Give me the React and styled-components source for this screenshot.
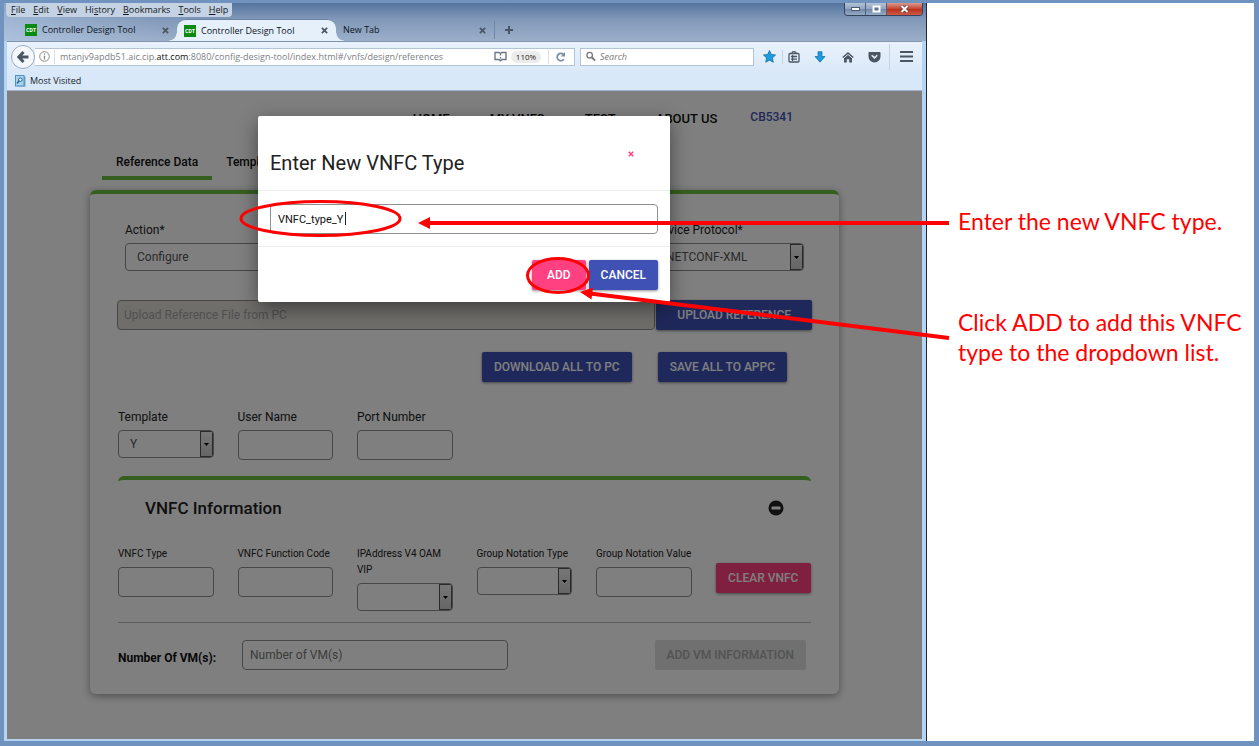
import React from "react";
import styled, { createGlobalStyle, css } from "styled-components";

const ui = `"Open Sans", "Noto Sans", sans-serif`;
const app = `Roboto, "Liberation Sans", sans-serif`;

const Global = createGlobalStyle`
  *, *::before, *::after { box-sizing: border-box; }
  body { margin: 0; background: #7092be; }
  button, input, select { font: inherit; margin: 0; color: inherit; }
  button { cursor: pointer; }
`;

const Slide = styled.main`
  position: relative;
  display: grid;
  grid-template-columns: minmax(0, 1fr) 327px;
  min-height: 100vh;
  border: solid #7092be;
  border-width: 3px 5px 5px 4px;
  background: #fff;
`;

const Browser = styled.section`
  display: flex;
  flex-direction: column;
  border-right: 1px solid #1e2733;
  background: #b4d4f1;
  font-family: ${ui};
  font-size: 9px;
  line-height: 14px;
  color: #16202c;
`;

const TitleArea = styled.header`
  background: linear-gradient(90deg, rgba(190, 212, 238, 0.5), rgba(190, 212, 238, 0) 160px),
    linear-gradient(#54749e, #8198b8 16px, #9bafc9 38px);
`;

const MenuRow = styled.div`
  display: flex;
  justify-content: space-between;
  align-items: flex-start;
  height: 16px;
  padding: 0 3px 0 2px;
`;

const Menus = styled.nav`
  display: flex;
  gap: 8px;
  height: 14px;
  padding: 0 4px 0 5px;
  border-radius: 0 0 4px 4px;
  background: #c5d2e3;
  a { color: #101820; text-decoration: none; line-height: 13px; }
`;

const WindowButtons = styled.div`
  display: flex;
  height: 13px;
  border: 1px solid #35445c;
  border-top: 0;
  border-radius: 0 0 4px 4px;
  overflow: hidden;
`;

const WindowButton = styled.button`
  display: grid;
  place-items: center;
  width: ${(p) => (p.$close ? 35 : 21)}px;
  padding: 0;
  border: 0;
  border-right: ${(p) => (p.$close ? "0" : "1px solid #4d607e")};
  background: ${(p) =>
    p.$close
      ? "linear-gradient(#d79a8f, #c4432f 50%, #b8301b 51%, #cf5a45)"
      : "linear-gradient(#b5c3d6, #8fa3bf 50%, #7189aa 51%, #93a9c6)"};
`;

const TabRow = styled.div`
  display: flex;
  align-items: stretch;
  height: 22px;
  padding-left: 14px;
`;

const BrowserTab = styled.div`
  position: relative;
  display: flex;
  align-items: center;
  gap: 5px;
  width: ${(p) => p.$width}px;
  padding: 0 8px 0 7px;
  color: #0c141e;
  ${(p) =>
    p.$active &&
    css`
      background: #e6f0fb;
      border-top: 1px solid #6d83a1;
      border-radius: 9px 9px 0 0;
      &::before, &::after {
        content: "";
        position: absolute;
        bottom: 0;
        width: 8px;
        height: 8px;
      }
      &::before {
        right: 100%;
        background: radial-gradient(circle at 0 0, transparent 7px, #e6f0fb 8px);
      }
      &::after {
        left: 100%;
        background: radial-gradient(circle at 100% 0, transparent 7px, #e6f0fb 8px);
      }
    `}
  span { flex: 1; white-space: nowrap; }
`;

const Favicon = styled.b`
  display: grid;
  place-items: center;
  width: 12px;
  height: 12px;
  background: #0b8a12;
  color: #fff;
  font-size: 5px;
  line-height: 12px;
`;

const IconButton = styled.button`
  display: grid;
  place-items: center;
  padding: 0;
  border: 0;
  background: none;
  color: ${(p) => p.$color || "#4b5663"};
  svg { display: block; }
`;

const NewTab = styled(IconButton)`
  width: 28px;
  margin: 2px 0;
  border-left: 1px solid #6f86a5;
`;

const Chrome = styled.div`
  margin: 0 4px 0 3px;
  border-top: 1px solid #8094ae;
  border-bottom: 1px solid #9fb4cc;
  background: linear-gradient(#e9f2fc, #d9e8f8 32px);
`;

const NavRow = styled.div`
  display: flex;
  align-items: center;
  height: 29px;
  padding-left: 4px;
`;

const BackButton = styled(IconButton)`
  flex: none;
  width: 24px;
  height: 24px;
  border: 1px solid #9aabc0;
  border-radius: 50%;
  background: #f4f8fd;
`;

const UrlBar = styled.div`
  display: flex;
  align-items: center;
  gap: 4px;
  flex: 1;
  height: 18px;
  padding: 0 8px 0 4px;
  border: 1px solid #b4c4d8;
  border-left: 0;
  background: #fff;
  color: #7b8087;
`;

const Address = styled.div`
  flex: 1;
  height: 14px;
  padding-left: 5px;
  border-left: 1px solid #dadfe5;
  white-space: nowrap;
  b { color: #111; font-weight: 400; }
`;

const ZoomBadge = styled.span`
  width: 30px;
  border-radius: 6px;
  background: #ececec;
  color: #222;
  font-size: 8px;
  line-height: 12px;
  text-align: center;
`;

const Reload = styled(IconButton)`
  margin-left: 3px;
  padding-left: 7px;
  height: 14px;
  border-left: 1px solid #dadfe5;
`;

const SearchBox = styled.label`
  display: flex;
  align-items: center;
  gap: 4px;
  width: 174px;
  height: 18px;
  margin-left: 5px;
  padding: 0 5px;
  border: 1px solid #b4c4d8;
  background: #fff;
  input {
    width: 100%;
    min-width: 0;
    padding: 0;
    border: 0;
    outline: 0;
    background: none;
    font-style: italic;
  }
  input::placeholder { color: #777; opacity: 1; }
`;

const Tools = styled.div`
  display: flex;
  align-items: center;
  padding-left: 2px;
`;

const Tool = styled(IconButton)`
  width: ${(p) => p.$width || 27}px;
  height: ${(p) => (p.$rule ? 26 : 14)}px;
  border-left: ${(p) => (p.$rule || p.$line ? "1px solid #c5d2e1" : "0")};
`;

const Bookmarks = styled.div`
  display: flex;
  align-items: center;
  gap: 4px;
  height: 19px;
  padding-left: 8px;
`;

const Viewport = styled.div`
  position: relative;
  flex: 1;
  margin: 0 4px 2px 3px;
  padding: 16px 83px 44px;
  background: #fff;
  font-family: ${app};
  font-size: 12px;
  line-height: 16px;
  color: #212121;
`;

const SiteNav = styled.nav`
  display: flex;
  justify-content: flex-end;
  gap: 40px;
  padding: 4px 46px 0 0;
  font-size: 13px;
  font-weight: 500;
  a { color: #111; text-decoration: none; }
  a:last-child {
    margin-left: -7px;
    color: #3f51b5;
    font-size: 12px;
    line-height: 13px;
  }
`;

const PageTabs = styled.div`
  display: flex;
  height: 41px;
  margin: 12px 0 10px 12px;
`;

const PageTab = styled.button`
  padding: 9px 14px 0;
  border: 0;
  border-bottom: 4px solid ${(p) => (p.$active ? "#6abf3f" : "transparent")};
  background: none;
  color: #111;
  font-size: 12px;
  font-weight: 500;
`;

const Card = styled.section`
  padding: 28px 28px 24px;
  border-top: 4px solid #6abf3f;
  border-radius: 6px;
  box-shadow: 0 2px 8px rgba(0, 0, 0, 0.4);
`;

const ActionRow = styled.div`
  display: flex;
  justify-content: space-between;
  padding: 0 7px;
  > * { width: 150px; }
`;

const Field = styled.div`
  display: flex;
  flex-direction: column;
  gap: 5px;
  label { font-size: ${(p) => (p.$small ? 10 : 12)}px; }
`;

const control = css`
  width: 100%;
  min-width: 0;
  border: 1px solid #8f8f8f;
  border-radius: 4px;
  background: transparent;
`;

const TextInput = styled.input`
  ${control}
  height: 30px;
  padding: 0 7px;
  outline: 0;
  &::placeholder { color: #777; opacity: 1; }
`;

const SelectFrame = styled.div`
  ${control}
  display: flex;
  height: 28px;
  overflow: hidden;
  select {
    flex: 1;
    min-width: 0;
    padding: 0 0 0 11px;
    border: 0;
    outline: 0;
    appearance: none;
    background: none;
    color: #555;
  }
  span {
    display: grid;
    place-items: center;
    width: 13px;
    border: 1px solid #555;
    background: linear-gradient(#eee, #ccc);
  }
`;

const UploadRow = styled.div`
  display: flex;
  gap: 1px;
  margin: 29px -1px 0;
`;

const UploadInput = styled(TextInput)`
  flex: 1;
  width: auto;
  padding: 0 6px;
  background: #e0dcd7;
  &::placeholder { color: #a0a0a0; }
`;

const tones = {
  primary: "#3f51b5",
  accent: "#ff4081",
};

const Button = styled.button`
  height: 30px;
  padding: 0 ${(p) => p.$pad || 12}px;
  border: 0;
  border-radius: 2px;
  background: ${(p) => tones[p.$tone || "primary"]};
  color: #fff;
  font-size: 12px;
  font-weight: 500;
  white-space: nowrap;
  box-shadow: 0 1px 3px rgba(0, 0, 0, 0.45);
  &:disabled {
    background: #e0e0e0;
    color: #a6a6a6;
    box-shadow: none;
  }
`;

const SaveRow = styled.div`
  display: flex;
  justify-content: flex-end;
  gap: 26px;
  margin: 22px 24px 27px 0;
`;

const FieldGrid = styled.div`
  display: grid;
  grid-template-columns: repeat(6, minmax(0, 1fr));
  column-gap: 24px;
  align-items: start;
`;

const ClearCell = styled.div`
  display: grid;
  padding-top: 17px;
`;

const VnfcPanel = styled.section`
  margin-top: 16px;
  border-top: 4px solid #6abf3f;
  border-radius: 6px 6px 0 0;
`;

const VnfcHeader = styled.div`
  display: flex;
  align-items: center;
  justify-content: space-between;
  padding: 18px 27px 28px;
  h2 { margin: 0; font-size: 17px; line-height: 20px; font-weight: 500; }
`;

const VmRow = styled.div`
  display: flex;
  align-items: center;
  margin-top: 11px;
  padding: 17px 5px 0 0;
  border-top: 1px solid #bbb;
  label { width: 124px; padding-top: 6px; font-weight: 700; color: #111; }
  input { width: 266px; }
  button { margin-left: auto; }
`;

const Backdrop = styled.div`
  position: absolute;
  inset: 0;
  background: rgba(0, 0, 0, 0.5);
`;

const Dialog = styled.div`
  position: absolute;
  top: 25px;
  left: 251px;
  width: 412px;
  background: #fff;
  border-radius: 2px;
  box-shadow: 0 6px 20px rgba(0, 0, 0, 0.45);
`;

const DialogHeader = styled.div`
  display: flex;
  justify-content: space-between;
  padding: 33px 36px 13px 12px;
  border-bottom: 1px solid #eee;
  h1 { margin: 0; font-size: 20px; line-height: 28px; font-weight: 400; }
  button { height: 10px; color: #ff4081; }
`;

const DialogBody = styled.div`
  display: grid;
  padding: 13px 12px 12px;
  input { font-size: 11px; color: #111; }
`;

const DialogFooter = styled.div`
  display: flex;
  justify-content: flex-end;
  gap: 3px;
  padding: 13px 12px 12px;
  border-top: 1px solid #eee;
`;

const Notes = styled.aside`
  padding: 203px 10px 0 31px;
  font-family: Lato, "Open Sans", sans-serif;
  font-size: 23px;
  line-height: 30px;
  color: #f00;
  p { margin: 0 0 71px; white-space: pre-line; }
`;

const Annotations = styled.svg`
  position: absolute;
  top: -3px;
  left: -4px;
  pointer-events: none;
`;

const Cross = ({ size = 7, width = 2 }) => (
  <svg width={size} height={size} viewBox="0 0 8 8" stroke="currentColor" strokeWidth={width}>
    <path d="M1 1l6 6M7 1L1 7" />
  </svg>
);

function Select({ id, value }) {
  return (
    <SelectFrame>
      <select id={id} defaultValue={value}>
        <option>{value}</option>
      </select>
      <span>
        <svg width="5" height="3" viewBox="0 0 5 3"><path d="M0 0h5L2.500 3z" /></svg>
      </span>
    </SelectFrame>
  );
}

function LabeledInput({ id, label, small }) {
  return (
    <Field $small={small}>
      <label htmlFor={id}>{label}</label>
      <TextInput id={id} />
    </Field>
  );
}

function LabeledSelect({ id, label, value = "", small }) {
  return (
    <Field $small={small}>
      <label htmlFor={id}>{label}</label>
      <Select id={id} value={value} />
    </Field>
  );
}

const menus = [["", "F", "ile"], ["", "E", "dit"], ["", "V", "iew"], ["Hi", "s", "tory"], ["", "B", "ookmarks"], ["", "T", "ools"], ["", "H", "elp"]];

function BrowserChrome() {
  return (
    <>
      <TitleArea>
        <MenuRow>
          <Menus>
            {menus.map(([a, b, c]) => (
              <a href="#menu" key={b + c}>{a}<u>{b}</u>{c}</a>
            ))}
          </Menus>
          <WindowButtons>
            <WindowButton aria-label="Minimize">
              <svg width="9" height="4"><rect x=".5" y=".5" width="8" height="3" fill="#fff" stroke="#4b5a70" /></svg>
            </WindowButton>
            <WindowButton aria-label="Maximize">
              <svg width="9" height="8"><rect x="1.500" y="1.500" width="6" height="5" fill="#60718c" stroke="#fff" strokeWidth="2" /></svg>
            </WindowButton>
            <WindowButton $close aria-label="Close">
              <svg width="9" height="8" viewBox="0 0 9 8">
                <path d="M1.500 1l6 6M7.500 1l-6 6" stroke="#5c3530" strokeWidth="3.400" />
                <path d="M1.500 1l6 6M7.500 1l-6 6" stroke="#fff" strokeWidth="2" />
              </svg>
            </WindowButton>
          </WindowButtons>
        </MenuRow>
        <TabRow>
          <BrowserTab $width={159}>
            <Favicon>CDT</Favicon>
            <span>Controller Design Tool</span>
            <IconButton aria-label="Close tab"><Cross /></IconButton>
          </BrowserTab>
          <BrowserTab $width={159} $active>
            <Favicon>CDT</Favicon>
            <span>Controller Design Tool</span>
            <IconButton aria-label="Close tab"><Cross /></IconButton>
          </BrowserTab>
          <BrowserTab $width={158}>
            <span>New Tab</span>
            <IconButton aria-label="Close tab"><Cross /></IconButton>
          </BrowserTab>
          <NewTab aria-label="New tab">
            <svg width="8" height="8" stroke="currentColor" strokeWidth="2"><path d="M4 0v8M0 4h8" /></svg>
          </NewTab>
        </TabRow>
      </TitleArea>
      <Chrome>
        <NavRow>
          <BackButton aria-label="Back">
            <svg width="12" height="12" viewBox="0 0 12 12" fill="none" stroke="currentColor" strokeWidth="3">
              <path d="M6.500 1L1.800 6l4.700 5M2 6h9.500" />
            </svg>
          </BackButton>
          <UrlBar>
            <svg width="11" height="11" viewBox="0 0 11 11" fill="none" stroke="#888">
              <circle cx="5.500" cy="5.500" r="4.800" />
              <path d="M5.500 4.800V8.500M5.500 2.500v1.300" strokeWidth="1.300" />
            </svg>
            <Address>mtanjv9apdb51.aic.cip.<b>att.com</b>:8080/config-design-tool/index.html#/vnfs/design/references</Address>
            <svg width="13" height="11" viewBox="0 0 13 11" fill="none" stroke="#6d7783" strokeWidth="1.400">
              <path d="M1 1.500h4l1.500 1L8 1.500h4v7H8l-1.500 1.300L5 8.500H1zM6.500 2.500v2M6.500 6v1.500" />
            </svg>
            <ZoomBadge>110%</ZoomBadge>
            <Reload aria-label="Reload">
              <svg width="10" height="10" viewBox="0 0 10 10" fill="none" stroke="#7b8da3" strokeWidth="1.700">
                <path d="M7.800 7.300A3.700 3.700 0 1 1 7.500 2.500" />
                <path d="M9 0v4.500H4.800z" fill="#7b8da3" stroke="none" />
              </svg>
            </Reload>
          </UrlBar>
          <SearchBox>
            <svg width="11" height="11" viewBox="0 0 11 11" fill="none" stroke="#777" strokeWidth="1.400">
              <circle cx="4" cy="4" r="3" /><path d="M6.300 6.300L10 10" strokeWidth="2" />
            </svg>
            <input aria-label="Search" placeholder="Search" />
          </SearchBox>
          <Tools>
            <Tool $width={26} aria-label="Bookmark this page">
              <svg width="13" height="13" viewBox="0 0 12 12" fill="#1c9be0" stroke="#14689b" strokeWidth=".7">
                <path d="M6 .5l1.700 3.600 3.900.5-2.900 2.700.8 4L6 9.400l-3.500 1.900.8-4L.4 4.600l3.900-.5z" />
              </svg>
            </Tool>
            <Tool $line $width={23} aria-label="Bookmarks list">
              <svg width="12" height="12" viewBox="0 0 12 12" fill="none" stroke="currentColor" strokeWidth="1.300">
                <rect x="1" y="2.500" width="10" height="8.500" rx="1" /><path d="M4 2.500C4 0 8 0 8 2.500M3 5.500h6M3 8.200h6M4.600 4v6" />
              </svg>
            </Tool>
            <Tool $width={30} aria-label="Downloads">
              <svg width="12" height="12" viewBox="0 0 12 12" fill="#1c9be0" stroke="#14689b" strokeWidth=".7">
                <path d="M4 .7h4V5.500h3L6 11.200 1 5.500h3z" />
              </svg>
            </Tool>
            <Tool $width={25} aria-label="Home">
              <svg width="12" height="12" viewBox="0 0 12 12" fill="#4b5663">
                <path d="M6 1l5.700 5-.9 1L6 2.900 1.200 7l-.9-1z" /><path d="M6 3.900l4 3.400V11.500H7.200V8.200H4.800v3.300H2V7.300z" />
              </svg>
            </Tool>
            <Tool $width={29} aria-label="Pocket">
              <svg width="13" height="12" viewBox="0 0 13 12">
                <path d="M1.500 1h10c.6 0 1 .4 1 1v3.500a6 6 0 0 1-12 0V2c0-.6.4-1 1-1z" fill="#4b5663" />
                <path d="M3.700 4.200l2.800 2.700 2.800-2.700" fill="none" stroke="#e6eef8" strokeWidth="1.500" />
              </svg>
            </Tool>
            <Tool $rule $width={33} aria-label="Menu">
              <svg width="13" height="11" stroke="currentColor" strokeWidth="2"><path d="M0 1h13M0 5.500h13M0 10h13" /></svg>
            </Tool>
          </Tools>
        </NavRow>
        <Bookmarks>
          <svg width="11" height="12" viewBox="0 0 11 12">
            <rect x="2.500" y="1.500" width="8" height="10" fill="#6ba5cf" />
            <rect x=".5" y=".5" width="8.500" height="10.500" fill="#a9d3ee" stroke="#4c90c4" />
            <circle cx="5.300" cy="4.700" r="1.800" fill="#e3f3fd" stroke="#255f94" />
            <path d="M4 6L2 8.500" stroke="#255f94" strokeWidth="1.300" />
          </svg>
          <span>Most Visited</span>
        </Bookmarks>
      </Chrome>
    </>
  );
}

function DesignPage() {
  return (
    <Viewport>
      <SiteNav>
        <a href="#home">HOME</a>
        <a href="#vnfs">MY VNFS</a>
        <a href="#test">TEST</a>
        <a href="#about">ABOUT US</a>
        <a href="#user">CB5341</a>
      </SiteNav>
      <PageTabs>
        <PageTab $active>Reference Data</PageTab>
        <PageTab>Template</PageTab>
      </PageTabs>
      <Card>
        <ActionRow>
          <LabeledSelect id="action" label="Action*" value="Configure" />
          <LabeledSelect id="protocol" label="Device Protocol*" value="NETCONF-XML" />
        </ActionRow>
        <UploadRow>
          <UploadInput disabled aria-label="Upload Reference File from PC" placeholder="Upload Reference File from PC" />
          <Button $pad={21}>UPLOAD REFERENCE</Button>
        </UploadRow>
        <SaveRow>
          <Button>DOWNLOAD ALL TO PC</Button>
          <Button>SAVE ALL TO APPC</Button>
        </SaveRow>
        <FieldGrid>
          <LabeledSelect id="template" label="Template" value="Y" />
          <LabeledInput id="user" label="User Name" />
          <LabeledInput id="port" label="Port Number" />
        </FieldGrid>
        <VnfcPanel>
          <VnfcHeader>
            <h2>VNFC Information</h2>
            <IconButton aria-label="Collapse">
              <svg width="16" height="16" viewBox="0 0 16 16">
                <circle cx="8" cy="8" r="7.500" fill="#222" />
                <rect x="3.500" y="6.500" width="9" height="3" rx=".5" fill="#fff" />
              </svg>
            </IconButton>
          </VnfcHeader>
          <FieldGrid>
            <LabeledInput small id="vnfc-type" label="VNFC Type" />
            <LabeledInput small id="function-code" label="VNFC Function Code" />
            <LabeledSelect small id="ip-address" label="IPAddress V4 OAM VIP" />
            <LabeledSelect small id="group-type" label="Group Notation Type" />
            <LabeledInput small id="group-value" label="Group Notation Value" />
            <ClearCell><Button $tone="accent">CLEAR VNFC</Button></ClearCell>
          </FieldGrid>
          <VmRow>
            <label htmlFor="vm-count">Number Of VM(s):</label>
            <TextInput id="vm-count" placeholder="Number of VM(s)" />
            <Button disabled>ADD VM INFORMATION</Button>
          </VmRow>
        </VnfcPanel>
      </Card>
      <Backdrop />
      <Dialog role="dialog" aria-labelledby="dialog-title">
        <DialogHeader>
          <h1 id="dialog-title">Enter New VNFC Type</h1>
          <IconButton aria-label="Close dialog"><Cross size={6} width={2} /></IconButton>
        </DialogHeader>
        <DialogBody>
          <TextInput aria-label="VNFC type" defaultValue="VNFC_type_Y" />
        </DialogBody>
        <DialogFooter>
          <Button $tone="accent" $pad={15}>ADD</Button>
          <Button>CANCEL</Button>
        </DialogFooter>
      </Dialog>
    </Viewport>
  );
}

export default function App() {
  return (
    <>
      <Global />
      <Slide>
        <Browser>
          <BrowserChrome />
          <DesignPage />
        </Browser>
        <Notes>
          <p>Enter the new VNFC type.</p>
          <p>{"Click ADD to add this VNFC\ntype to the dropdown list."}</p>
        </Notes>
        <Annotations width="960" height="360" fill="none" stroke="#f00" strokeWidth="3">
          <path d="M345.500 212v13" stroke="#222" strokeWidth="1" />
          <ellipse cx="320.500" cy="218.500" rx="79.500" ry="17" />
          <ellipse cx="558" cy="275.500" rx="30.500" ry="17" />
          <path d="M949 223H428M949 338L590 293.500" strokeWidth="4" />
          <path d="M418 223l12-6v12zM580 292l13-4.500-1.500 12z" fill="#f00" stroke="none" />
        </Annotations>
      </Slide>
    </>
  );
}
